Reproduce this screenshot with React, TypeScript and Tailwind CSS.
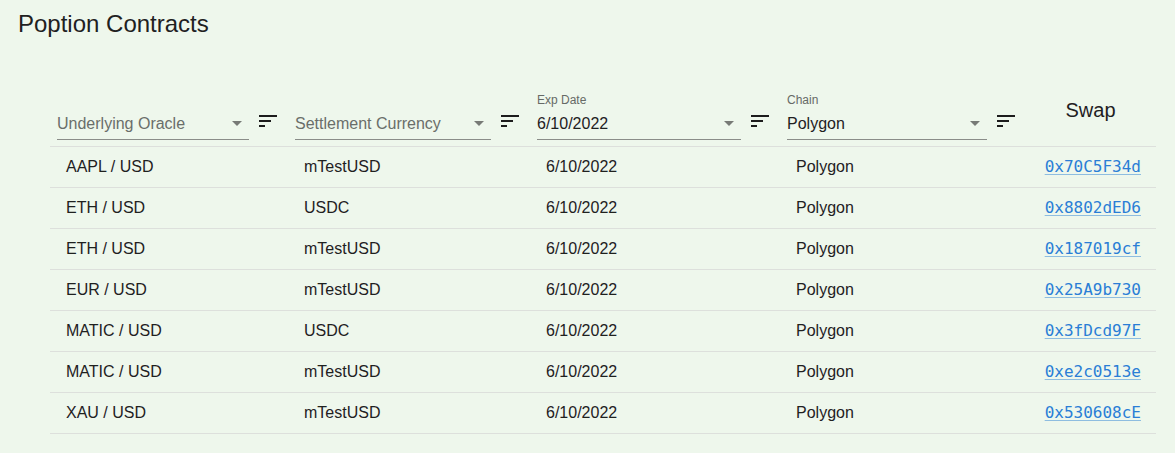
import React from 'react';

type Row = { oracle: string; currency: string; date: string; chain: string; swap: string };

const rows: Row[] = [
  { oracle: 'AAPL / USD', currency: 'mTestUSD', date: '6/10/2022', chain: 'Polygon', swap: '0x70C5F34d' },
  { oracle: 'ETH / USD', currency: 'USDC', date: '6/10/2022', chain: 'Polygon', swap: '0x8802dED6' },
  { oracle: 'ETH / USD', currency: 'mTestUSD', date: '6/10/2022', chain: 'Polygon', swap: '0x187019cf' },
  { oracle: 'EUR / USD', currency: 'mTestUSD', date: '6/10/2022', chain: 'Polygon', swap: '0x25A9b730' },
  { oracle: 'MATIC / USD', currency: 'USDC', date: '6/10/2022', chain: 'Polygon', swap: '0x3fDcd97F' },
  { oracle: 'MATIC / USD', currency: 'mTestUSD', date: '6/10/2022', chain: 'Polygon', swap: '0xe2c0513e' },
  { oracle: 'XAU / USD', currency: 'mTestUSD', date: '6/10/2022', chain: 'Polygon', swap: '0x530608cE' },
];

const SortIcon = () => (
  <svg viewBox="0 0 24 24" className="w-6 h-6 shrink-0 mb-[7px] fill-[#1c1c1c]">
    <path d="M3 18h6v-2H3v2zM3 6v2h18V6H3zm0 7h12v-2H3v2z" />
  </svg>
);

const Select = ({ label, value, width }: { label?: string; value: string; width: string }) => (
  <div className={`${width} flex flex-col`}>
    <div className="h-[16px] text-[12px] leading-[16px] text-[#666a66]">{label}</div>
    <div className="mt-[3px] pb-[4px] border-b border-[#8a8d89] flex items-center justify-between">
      <span className={`text-[16px] leading-[23px] ${label ? 'text-[#1f211f]' : 'text-[#6a6e6a]'}`}>{value}</span>
      <svg viewBox="0 0 24 24" className="w-6 h-6 fill-[#777a76]">
        <path d="M7 10l5 5 5-5z" />
      </svg>
    </div>
  </div>
);

const App: React.FC = () => {
  return (
    <div className="min-h-[453px] w-full bg-[#eef7ec] font-['Liberation_Sans',Arial,sans-serif] text-[#1f211f]">
      <h1 className="pl-[18px] pt-[6px] text-[24px] leading-[36px] font-normal">Poption Contracts</h1>

      <div className="ml-[50px] mt-[46px] w-[1106px]">
        {/* header */}
        <div className="flex h-[59px] border-b border-[#dde0dc] items-end">
          <div className="w-[238px] pl-[7px] pb-[6px] flex items-end gap-[7px]">
            <Select value="Underlying Oracle" width="w-[192px]" />
            <SortIcon />
          </div>
          <div className="w-[242px] pl-[7px] pb-[6px] flex items-end gap-[7px]">
            <Select value="Settlement Currency" width="w-[196px]" />
            <SortIcon />
          </div>
          <div className="w-[250px] pl-[7px] pb-[6px] flex items-end gap-[7px]">
            <Select label="Exp Date" value="6/10/2022" width="w-[204px]" />
            <SortIcon />
          </div>
          <div className="w-[250px] pl-[7px] pb-[6px] flex items-end gap-[7px]">
            <Select label="Chain" value="Polygon" width="w-[200px]" />
            <SortIcon />
          </div>
          <div className="w-[126px] self-stretch flex items-center justify-center pb-[14px] pr-[5px]">
            <span className="text-[20px] leading-[28px]">Swap</span>
          </div>
        </div>

        {/* body */}
        {rows.map((r, i) => (
          <div key={i} className="flex h-[41px] items-center border-b border-[#dde0dc] text-[16px]">
            <div className="w-[238px] pl-[16px]">{r.oracle}</div>
            <div className="w-[242px] pl-[16px]">{r.currency}</div>
            <div className="w-[250px] pl-[16px]">{r.date}</div>
            <div className="w-[250px] pl-[16px]">{r.chain}</div>
            <div className="w-[126px] pr-[15px] text-right">
              <a
                href="#"
                className="font-['DejaVu_Sans_Mono',monospace] text-[#2a7ed6] underline decoration-[rgba(25,118,210,0.45)] underline-offset-[2px]"
              >
                {r.swap}
              </a>
            </div>
          </div>
        ))}
      </div>
    </div>
  );
};

export default App;
